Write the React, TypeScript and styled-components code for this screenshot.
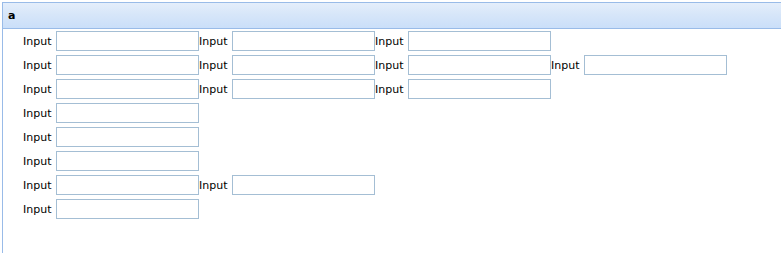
import React from 'react';
import styled, { createGlobalStyle } from 'styled-components';

const GlobalStyle = createGlobalStyle`
  html, body {
    margin: 0;
    padding: 0;
    background: #ffffff;
    overflow: hidden;
  }
  body {
    font-family: "DejaVu Sans", Verdana, sans-serif;
  }
`;

const Panel = styled.section`
  margin: 2px 0 0 2px;
  height: 251px;
  border: 1px solid #99bbe8;
  border-right: none;
  border-bottom: none;
  box-sizing: border-box;
  display: flex;
  flex-direction: column;
`;

const Header = styled.header`
  height: 25px;
  padding-left: 5px;
  display: flex;
  align-items: center;
  border-bottom: 1px solid #99bbe8;
  background: linear-gradient(to bottom, #e4eefb 0%, #d7e6f9 45%, #cadff9 100%);
  font-size: 11px;
  font-weight: bold;
  color: #15428b;
  color: #000;
`;

const Body = styled.div`
  padding: 2px 0 0 20px;
  display: flex;
  flex-direction: column;
  gap: 4px;
`;

const Row = styled.div`
  display: flex;
  height: 20px;
`;

const Field = styled.div`
  display: flex;
  align-items: center;
`;

const Label = styled.label`
  width: 33px;
  font-size: 11px;
  color: #000;
  white-space: nowrap;
`;

const TextBox = styled.input`
  width: 143px;
  height: 20px;
  box-sizing: border-box;
  margin: 0;
  padding: 1px 3px;
  border: 1px solid #a4bed4;
  background: #fff;
  font-family: inherit;
  font-size: 11px;
  outline: none;
`;

const rows = [3, 4, 3, 1, 1, 1, 2, 1];

export default function App() {
  return (
    <>
      <GlobalStyle />
      <Panel>
        <Header>a</Header>
        <Body>
          {rows.map((count, r) => (
            <Row key={r}>
              {Array.from({ length: count }).map((_, c) => (
                <Field key={c}>
                  <Label>Input</Label>
                  <TextBox type="text" />
                </Field>
              ))}
            </Row>
          ))}
        </Body>
      </Panel>
    </>
  );
}
